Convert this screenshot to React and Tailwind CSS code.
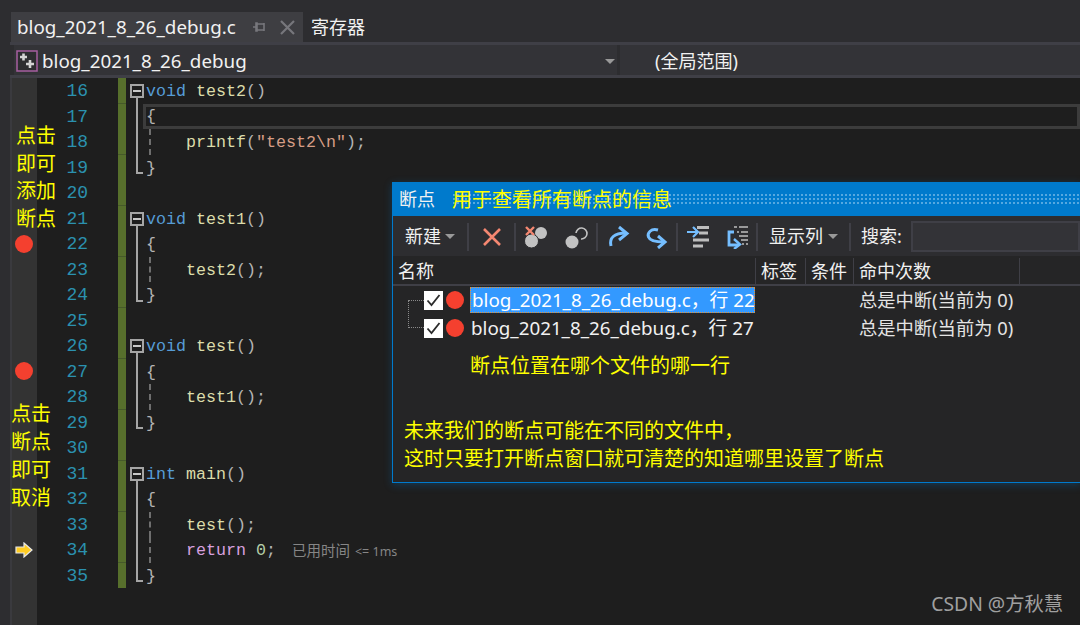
const ui = "font-['Noto_Sans','Noto_Sans_CJK_SC',sans-serif]";
const cjk = "font-['Noto_Sans_CJK_SC',sans-serif]";

const K = "text-[#569cd6]";
const F = "text-[#dcdcaa]";
const P = "text-[#b4b4b4]";
const S = "text-[#d69d85]";
const R = "text-[#d8a0df]";
const N = "text-[#b5cea8]";
const T = "text-[#dcdcdc]";

const lines = [
  { n: 16, fold: "box", code: [[K, "void"], [T, " "], [F, "test2"], [P, "()"]] },
  { n: 17, fold: "line", current: true, code: [[P, "{"]] },
  { n: 18, fold: "line", guide: true, code: [[F, "    printf"], [P, "("], [S, "\"test2\\n\""], [P, ");"]] },
  { n: 19, fold: "end", code: [[P, "}"]] },
  { n: 20, code: [] },
  { n: 21, fold: "box", code: [[K, "void"], [T, " "], [F, "test1"], [P, "()"]] },
  { n: 22, fold: "line", glyph: "dot", code: [[P, "{"]] },
  { n: 23, fold: "line", guide: true, code: [[F, "    test2"], [P, "();"]] },
  { n: 24, fold: "end", code: [[P, "}"]] },
  { n: 25, code: [] },
  { n: 26, fold: "box", code: [[K, "void"], [T, " "], [F, "test"], [P, "()"]] },
  { n: 27, fold: "line", glyph: "dot", code: [[P, "{"]] },
  { n: 28, fold: "line", guide: true, code: [[F, "    test1"], [P, "();"]] },
  { n: 29, fold: "end", code: [[P, "}"]] },
  { n: 30, code: [] },
  { n: 31, fold: "box", code: [[K, "int"], [T, " "], [F, "main"], [P, "()"]] },
  { n: 32, fold: "line", code: [[P, "{"]] },
  { n: 33, fold: "line", guide: true, code: [[F, "    test"], [P, "();"]] },
  { n: 34, fold: "line", guide: true, glyph: "arrow", hint: true, code: [[R, "    return"], [T, " "], [N, "0"], [P, ";"]] },
  { n: 35, fold: "end", code: [[P, "}"]] },
];

function Caret() {
  return <span className="inline-block border-x-[5px] border-t-[5px] border-x-transparent border-t-[#999999]" />;
}

function Fold({ type }) {
  if (type === "box") {
    return (
      <div className="relative h-full w-[13px]">
        <div className="absolute top-[6px] left-0 flex h-[14px] w-[14px] items-center justify-center border-2 border-[#a5a5a5] bg-[#1e1e1e]">
          <div className="h-[2px] w-[8px] bg-[#c8c8c8]" />
        </div>
        <div className="absolute top-[20px] bottom-0 left-[6px] w-[2px] bg-[#a5a5a5]" />
      </div>
    );
  }
  if (type === "line") {
    return (
      <div className="relative h-full w-[13px]">
        <div className="absolute top-0 bottom-0 left-[6px] w-[2px] bg-[#a5a5a5]" />
      </div>
    );
  }
  if (type === "end") {
    return (
      <div className="relative h-full w-[13px]">
        <div className="absolute top-0 bottom-[6px] left-[6px] w-[2px] bg-[#a5a5a5]" />
        <div className="absolute bottom-[6px] left-[6px] h-[2px] w-[7px] bg-[#a5a5a5]" />
      </div>
    );
  }
  return <div className="w-[13px]" />;
}

function CodeRow({ line }) {
  return (
    <div className="flex h-[25.5px] items-stretch">
      <div className="w-[51px] text-right text-[18px] leading-[27px] text-[#2b91af]">{line.n}</div>
      <div className={`ml-[30px] w-[8px] bg-[#576f2c] ${line.n % 2 === 0 ? "border-b border-[#46592a]" : ""}`} />
      <div className="ml-[4px]">
        <Fold type={line.fold} />
      </div>
      <div
        className={`relative flex flex-1 items-center whitespace-pre ${
          line.current ? "border-[3px] border-[#3c3c3c] pl-0" : "pt-[2px] pl-[3px]"
        }`}
      >
        {line.guide && <div className="absolute top-0 bottom-0 left-[6px] border-l-2 border-dashed border-[#6e6e6e]" />}
        {line.code.map(([color, text], i) => (
          <span key={i} className={color}>{text}</span>
        ))}
        {line.hint && (
          <span className={`ml-[16px] flex items-baseline gap-[5px] text-[#868686] ${ui}`}>
            <span className="text-[14.5px]">已用时间</span>
            <span className="text-[12.5px]">&lt;= 1ms</span>
          </span>
        )}
      </div>
    </div>
  );
}

function Glyph({ type }) {
  return (
    <div className="flex h-[25.5px] items-center justify-center pr-[2px]">
      {type === "dot" && <div className="h-[18px] w-[18px] rounded-full bg-[#f4402f]" />}
      {type === "arrow" && (
        <svg width="18" height="16" viewBox="0 0 18 16">
          <path d="M1 5h8V1l8 7-8 7v-4H1z" fill="#ffcc22" stroke="#e8e8e8" strokeWidth="1.2" />
        </svg>
      )}
    </div>
  );
}

function ToolCell({ w, children }) {
  return <div className={`flex h-full items-center justify-center ${w}`}>{children}</div>;
}

function Sep() {
  return <div className="h-[28px] w-[2px] bg-[#3f3f46]" />;
}

function DeleteIcon() {
  return (
    <svg width="20" height="20" viewBox="0 0 20 20">
      <path d="M2 2l16 16M18 2L2 18" stroke="#f48771" strokeWidth="2.6" />
    </svg>
  );
}

function DeleteAllIcon() {
  return (
    <svg width="24" height="24" viewBox="0 0 24 24">
      <circle cx="17" cy="8" r="6" fill="#c2c2c2" />
      <circle cx="7.500" cy="16" r="7" fill="#c2c2c2" stroke="#2d2d30" strokeWidth="1" />
      <path d="M2 2l8 8M10 2l-8 8" stroke="#f48771" strokeWidth="2.4" />
    </svg>
  );
}

function DisableIcon() {
  return (
    <svg width="24" height="24" viewBox="0 0 24 24">
      <circle cx="8" cy="17" r="6.5" fill="#c2c2c2" />
      <path d="M12 8a5.500 5.500 0 1 1 5 6" fill="none" stroke="#c2c2c2" strokeWidth="1.6" />
    </svg>
  );
}

function GotoIcon() {
  return (
    <svg width="24" height="24" viewBox="0 0 24 24" fill="none">
      <path d="M5 21c-2-8 3-13 15-13" stroke="#75beff" strokeWidth="3" />
      <path d="M13 2l8 6.500-8 6.500" stroke="#75beff" strokeWidth="3" />
    </svg>
  );
}

function StepIcon() {
  return (
    <svg width="24" height="24" viewBox="0 0 24 24" fill="none">
      <path d="M13 5C6 3 2 8 3.500 12 5 16 12 17 19 17" stroke="#75beff" strokeWidth="3" />
      <path d="M13 11l7 6-7 6" stroke="#75beff" strokeWidth="3" />
    </svg>
  );
}

function IndentIcon() {
  return (
    <svg width="24" height="24" viewBox="0 0 24 24" fill="none">
      <path d="M11 2.500h12M13 8h9M7 15h16M7 21h10" stroke="#bdbdbd" strokeWidth="2.8" />
      <path d="M1 7h10M7 2l5 5-5 5" stroke="#75beff" strokeWidth="2.2" />
    </svg>
  );
}

function ExportIcon() {
  return (
    <svg width="24" height="24" viewBox="0 0 24 24" fill="none">
      <path d="M9 2h3M14 2h9M12 7h2M16 7h7M14 11h9M16 15h7M17 19h2M21 19h2" stroke="#bdbdbd" strokeWidth="1.6" />
      <path d="M9 7H4v13h9" stroke="#75beff" strokeWidth="2.8" />
      <path d="M9 14l6 5.500-6 4.500" stroke="#75beff" strokeWidth="2.4" />
    </svg>
  );
}

function BreakpointRow({ selected, line }) {
  return (
    <div className="flex h-[28px] items-center">
      <div className="ml-[31px] flex h-[19px] w-[19px] items-center justify-center bg-white">
        <svg width="15" height="13" viewBox="0 0 15 13" fill="none">
          <path d="M1.5 6.5l4 4.5 8-10" stroke="#2b2b2b" strokeWidth="1.8" />
        </svg>
      </div>
      <div className="ml-[3px] h-[18px] w-[18px] rounded-full bg-[#f4402f]" />
      <div
        className={`ml-[6px] flex h-[26px] w-[285px] items-center whitespace-nowrap pl-[1px] text-[18.8px] text-[#f1f1f1] ${
          selected ? "border border-dotted border-[#e8912d] bg-[#3399ff] text-white" : ""
        }`}
      >
        blog_2021_8_26_debug.c，行 {line}
      </div>
      <div className="ml-[104px] whitespace-nowrap text-[18.3px] text-[#e4e4e4]">总是中断(当前为 0)</div>
    </div>
  );
}

function BreakpointWindow() {
  return (
    <div className={`absolute top-[182px] left-[392px] h-[301px] w-[689px] border border-[#007acc] bg-[#252526] shadow-[0_2px_8px_rgba(0,122,204,0.3)] ${ui}`}>
      <div className="flex h-[33px] items-center bg-[#007acc] pl-[6px]">
        <span className="text-[18px] text-[#f1f1f1]">断点</span>
        <div className="ml-[17px] flex h-[13px] flex-1 items-center bg-[radial-gradient(#55a8e0_1px,transparent_1px)] bg-[length:4px_4px]">
          <span className="text-[20px] text-[#ffff00]">用于查看所有断点的信息</span>
        </div>
      </div>
      <div className="flex h-[40px] items-center bg-[#2d2d30] pt-[1px] text-[18px] text-[#f1f1f1]">
        <div className="flex w-[74px] items-center pl-[12px]">
          <span>新建</span>
          <span className="ml-[4px] flex"><Caret /></span>
        </div>
        <Sep />
        <ToolCell w="w-[45px]"><DeleteIcon /></ToolCell>
        <Sep />
        <ToolCell w="w-[40px]"><DeleteAllIcon /></ToolCell>
        <ToolCell w="w-[40px]"><DisableIcon /></ToolCell>
        <Sep />
        <ToolCell w="w-[39px]"><GotoIcon /></ToolCell>
        <ToolCell w="w-[39px]"><StepIcon /></ToolCell>
        <Sep />
        <ToolCell w="w-[39px]"><IndentIcon /></ToolCell>
        <ToolCell w="w-[39px]"><ExportIcon /></ToolCell>
        <Sep />
        <div className="flex w-[91px] items-center pl-[11px]">
          <span>显示列</span>
          <span className="ml-[5px] flex"><Caret /></span>
        </div>
        <Sep />
        <span className="ml-[10px] w-[50px]">搜索:</span>
        <div className="h-[31px] flex-1 border-2 border-[#3f3f46] bg-[#333337]" />
      </div>
      <div className="flex h-[30px] items-center border-b-2 border-[#3f3f46] pt-[2px] text-[18px] text-[#f1f1f1]">
        <div className="flex h-full w-[363px] items-center border-r border-[#3f3f46] pl-[5px]">名称</div>
        <div className="flex h-full w-[50px] items-center border-r border-[#3f3f46] pl-[5px]">标签</div>
        <div className="flex h-full w-[48px] items-center border-r border-[#3f3f46] pl-[5px]">条件</div>
        <div className="flex h-full w-[166px] items-center border-r border-[#3f3f46] pl-[5px]">命中次数</div>
      </div>
      <div className="relative">
        <div className="absolute top-[14px] left-[15px] h-[28px] w-[16px] border-b border-l border-dotted border-[#8a8a8a]" />
        <div className="absolute top-[14px] left-[15px] w-[16px] border-t border-dotted border-[#8a8a8a]" />
        <BreakpointRow selected line={22} />
        <BreakpointRow line={27} />
      </div>
      <div className="text-[20px] leading-[28px] text-[#ffff00]">
        <p className="mt-[10px] pl-[77px]">断点位置在哪个文件的哪一行</p>
        <p className="mt-[37px] pl-[11px]">未来我们的断点可能在不同的文件中，</p>
        <p className="pl-[11px]">这时只要打开断点窗口就可清楚的知道哪里设置了断点</p>
      </div>
    </div>
  );
}

export default function App() {
  return (
    <div className="relative h-[625px] w-[1080px] overflow-hidden bg-[#2d2d30]">
      <div className={`flex h-[42px] items-end pl-[11px] text-[#f1f1f1] ${ui}`}>
        <div className="flex h-[30px] w-[292px] items-center bg-[#3e3e42] pl-[6px] text-[18.8px]">
          <span className="w-[236px] whitespace-nowrap">blog_2021_8_26_debug.c</span>
          <svg width="14" height="14" viewBox="0 0 14 14" fill="none" stroke="#77777c" strokeWidth="1.6">
            <path d="M0 7h3M3 3h1v8H3zM4 4h7v6H4M11 3v8" />
          </svg>
          <svg className="ml-[13px]" width="15" height="15" viewBox="0 0 15 15" stroke="#77777c" strokeWidth="2.2">
            <path d="M1 1l13 13M14 1L1 14" />
          </svg>
        </div>
        <div className="flex h-[30px] items-center pl-[8px] text-[18px]">寄存器</div>
      </div>

      <div className={`ml-[10px] flex h-[36px] gap-[3px] border-y-[3px] border-[#3f3f46] bg-[#2d2d30] text-[#f1f1f1] ${ui}`}>
        <div className="ml-[4px] flex w-[603px] items-center bg-[#333337] pt-[2px] text-[18.8px]">
          <svg className="ml-[2px]" width="22" height="22" viewBox="0 0 22 22" fill="none">
            <rect x="1" y="1" width="20" height="20" stroke="#a65fa0" strokeWidth="1.5" fill="#2d2d30" />
            <path d="M4 7h7M7.5 3.500v7M10 14h8M14 10v8" stroke="#d4d4d4" strokeWidth="2.6" />
          </svg>
          <span className="ml-[4px] whitespace-nowrap">blog_2021_8_26_debug</span>
          <span className="ml-auto mr-[2px] flex"><Caret /></span>
        </div>
        <div className="flex flex-1 items-center bg-[#333337] pt-[2px] pl-[35px] text-[18px]">(全局范围)</div>
      </div>

      <div className="flex h-[547px]">
        <div className="ml-[10px] w-[27px] border-l-2 border-[#3a3a3e] bg-[#333333]">
          {lines.map((line) => (
            <Glyph key={line.n} type={line.glyph} />
          ))}
        </div>
        <div className="flex-1 bg-[#1e1e1e] font-['Liberation_Mono',monospace] text-[16.67px]">
          {lines.map((line) => (
            <CodeRow key={line.n} line={line} />
          ))}
        </div>
      </div>

      <div className={`absolute top-[121px] left-[16px] text-[20px] leading-[27.5px] text-[#ffff00] ${cjk}`}>
        <div>点击</div>
        <div>即可</div>
        <div>添加</div>
        <div>断点</div>
      </div>
      <div className={`absolute top-[399px] left-[11px] text-[20px] leading-[28px] text-[#ffff00] ${cjk}`}>
        <div>点击</div>
        <div>断点</div>
        <div>即可</div>
        <div>取消</div>
      </div>

      <BreakpointWindow />

      <div className={`absolute right-[17px] bottom-[6px] text-[19.3px] text-[#a0a0a0] ${ui}`}>CSDN @方秋慧</div>
    </div>
  );
}
